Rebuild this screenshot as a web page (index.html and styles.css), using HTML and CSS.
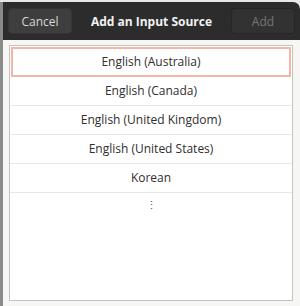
FILE: index.html
```html
<!DOCTYPE html>
<html lang="en">
<head>
    <meta charset="UTF-8">
    <title>Add an Input Source</title>
    <link rel="stylesheet" href="styles.css">
</head>
<body>
    <div class="dialog">
        <header class="headerbar">
            <button class="btn cancel">Cancel</button>
            <div class="title">Add an Input Source</div>
            <button class="btn add" disabled>Add</button>
        </header>
        <main class="content">
            <ul class="sources">
                <li class="selected">English (Australia)</li>
                <li>English (Canada)</li>
                <li>English (United Kingdom)</li>
                <li>English (United States)</li>
                <li>Korean</li>
                <li class="more">&#8942;</li>
            </ul>
        </main>
    </div>
</body>
</html>
```

FILE: styles.css
```css
body {
    margin: 0;
    padding: 0;
    background-color: #e8e8e7;
    font-family: "Open Sans", "Noto Sans", sans-serif;
    font-size: 12px;
}
.dialog {
    height: 304px;
    margin-top: 2px;
    display: flex;
    flex-direction: column;
    border-left: 3px solid #8a8a8a;
    border-radius: 0 7px 0 0;
    overflow: hidden;
    background-color: #f6f6f5;
}
.headerbar {
    height: 38px;
    background-color: #2c2c2c;
    display: flex;
    align-items: center;
    justify-content: space-between;
    padding: 0 5px 0 5px;
}
.btn {
    width: 64px;
    height: 26px;
    border-radius: 4px;
    font-family: inherit;
    font-size: 12px;
    padding: 0;
}
.cancel {
    background-color: #3e3e3e;
    border: 1px solid #353535;
    color: #d8d8d8;
}
.add {
    background-color: #323232;
    border: 1px solid #262626;
    color: #777;
}
.title {
    color: #f2f2f2;
    font-weight: bold;
    font-size: 12px;
}
.content {
    flex: 1;
    padding: 5px 7px 5px 6px;
    display: flex;
}
.sources {
    flex: 1;
    list-style: none;
    margin: 0;
    padding: 0;
    background-color: #fff;
    border: 1px solid #c3c3c3;
}
.sources li {
    height: 28px;
    line-height: 28px;
    text-align: center;
    color: #2e2e2e;
    border-bottom: 1px solid #e8e8e8;
}
.sources li.selected {
    height: 26px;
    line-height: 26px;
    margin: 1px 1px 0 1px;
    border: 2px solid #f2b7a4;
}
.sources li.more {
    height: 24px;
    line-height: 24px;
    border-bottom: none;
    color: #555;
    font-size: 11px;
}
```
